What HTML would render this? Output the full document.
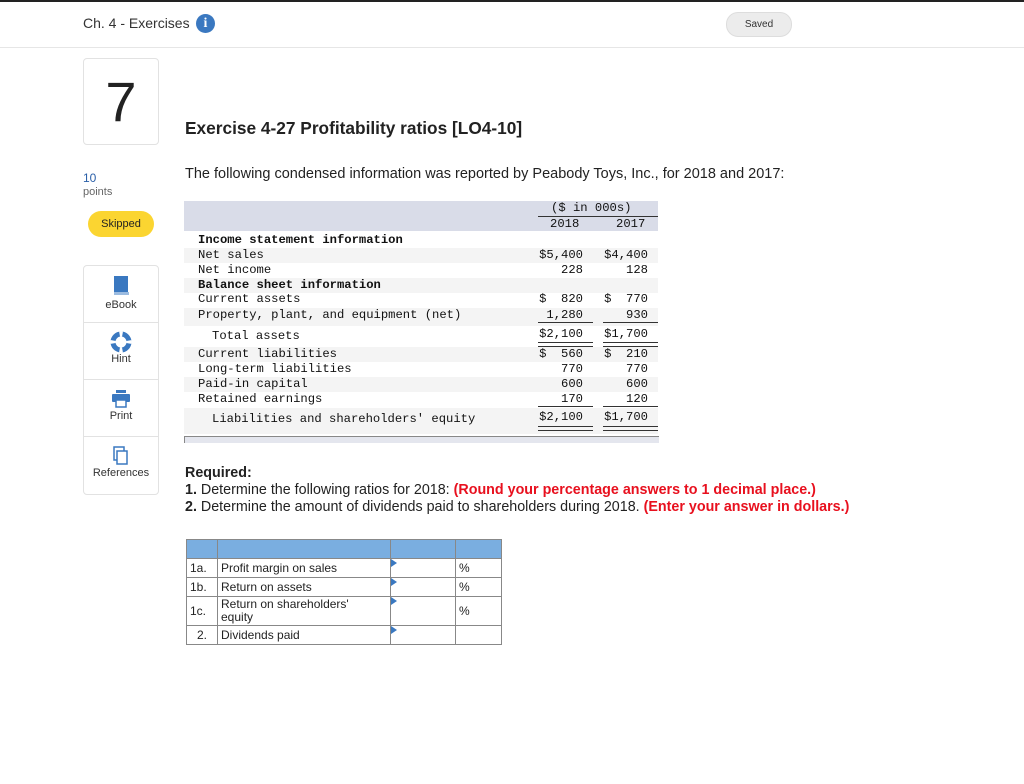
<!DOCTYPE html>
<html><head><style>
body{margin:0;width:1024px;height:784px;background:#fff;font-family:"Liberation Sans",sans-serif;position:relative;overflow:hidden;color:#222}
.a{position:absolute}
.m{font-family:"Liberation Mono",monospace;font-size:12.2px;color:#111}
.row{position:absolute;left:184px;width:474px;height:15px}
.row span{position:absolute;top:0px;white-space:pre}
.c1{right:75px}.c2{right:10px}
.side{position:absolute;left:83px;width:74px;height:57px;border:1px solid #e2e2e2;background:#fff;text-align:center;font-size:11px;color:#333}
td{border:1px solid #888;font-size:12px;padding:0 3px;height:18px}
</style></head><body>
<div class="a" style="left:0;top:0;width:1024px;height:2px;background:#222"></div>
<div class="a" style="left:0;top:47px;width:1024px;height:1px;background:#e6e6e6"></div>
<div class="a" style="left:83px;top:15px;font-size:14px;color:#333">Ch. 4 - Exercises</div>
<div class="a" style="left:196px;top:14px;width:19px;height:19px;border-radius:50%;background:#3a78c0;color:#fff;font-weight:bold;font-size:14px;text-align:center;line-height:19px;font-family:'Liberation Serif',serif">i</div>
<div class="a" style="left:726px;top:12px;width:64px;height:23px;border-radius:12px;background:#ececec;border:1px solid #ddd;font-size:10px;text-align:center;line-height:23px;color:#333">Saved</div>
<div class="a" style="left:83px;top:58px;width:74px;height:85px;border:1px solid #e2e2e2;border-radius:4px;font-size:56px;text-align:center;line-height:85px;color:#222">7</div>
<div class="a" style="left:185px;top:118px;font-size:17.3px;font-weight:bold;color:#222">Exercise 4-27 Profitability ratios [LO4-10]</div>
<div class="a" style="left:83px;top:171px;font-size:12px;color:#2a5fa8">10</div>
<div class="a" style="left:83px;top:186px;font-size:11px;color:#666">points</div>
<div class="a" style="left:88px;top:211px;width:66px;height:26px;border-radius:13px;background:#fbd531;font-size:11px;text-align:center;line-height:26px">Skipped</div>
<div class="side" style="top:265px;border-radius:4px 4px 0 0"><svg width="20" height="24" style="margin-top:8px" viewBox="0 0 20 24"><rect x="3" y="2" width="14" height="18" fill="#3a78c0"/><rect x="3" y="18" width="15" height="3" fill="#9bbbe0"/></svg><div style="margin-top:-2px">eBook</div></div>
<div class="side" style="top:322px"><svg width="22" height="22" style="margin-top:8px" viewBox="0 0 22 22"><circle cx="11" cy="11" r="8" fill="none" stroke="#3a78c0" stroke-width="5"/><circle cx="11" cy="11" r="8" fill="none" stroke="#fff" stroke-width="5" stroke-dasharray="3 9.5" stroke-dashoffset="1.5"/></svg><div style="margin-top:-3px">Hint</div></div>
<div class="side" style="top:379px"><svg width="22" height="22" style="margin-top:8px" viewBox="0 0 22 22"><rect x="6" y="2" width="10" height="3" fill="#3a78c0"/><rect x="2" y="6" width="18" height="8" rx="1" fill="#3a78c0"/><rect x="6" y="12" width="10" height="7" fill="#fff" stroke="#3a78c0" stroke-width="1.5"/></svg><div style="margin-top:-3px">Print</div></div>
<div class="side" style="top:436px;border-radius:0 0 4px 4px"><svg width="22" height="22" style="margin-top:8px" viewBox="0 0 22 22"><rect x="4" y="2" width="10" height="13" fill="#fff" stroke="#3a78c0" stroke-width="1.5"/><rect x="7" y="6" width="10" height="13" fill="#fff" stroke="#3a78c0" stroke-width="1.5"/></svg><div style="margin-top:-3px">References</div></div>
<div class="a" style="left:185px;top:166px;font-size:14.5px;color:#222">The following condensed information was reported by Peabody Toys, Inc., for 2018 and 2017:</div>
<div class="a" style="left:184px;top:201px;width:474px;height:30px;background:#d9dce8"></div>
<div class="a m" style="left:551px;top:201px">($ in 000s)</div>
<div class="a" style="left:538px;top:216px;width:120px;height:1px;background:#333"></div>
<div class="a m" style="left:550px;top:217px">2018</div><div class="a m" style="left:616px;top:217px">2017</div>
<div class="row m" style="top:233px"><span style="left:14px;font-weight:bold">Income statement information</span></div>
<div class="row m" style="top:248px;background:#f4f4f4"><span style="left:14px">Net sales</span><span class="c1">$5,400</span><span class="c2">$4,400</span></div>
<div class="row m" style="top:263px"><span style="left:14px">Net income</span><span class="c1">228</span><span class="c2">128</span></div>
<div class="row m" style="top:278px;background:#f4f4f4"><span style="left:14px;font-weight:bold">Balance sheet information</span></div>
<div class="row m" style="top:292px"><span style="left:14px">Current assets</span><span class="c1">$  820</span><span class="c2">$  770</span></div>
<div class="row m" style="top:308px;height:18px;background:#f4f4f4"><span style="left:14px">Property, plant, and equipment (net)</span><span class="c1">1,280</span><span class="c2">930</span></div>
<div class="a" style="left:538px;top:322px;width:55px;height:1px;background:#333"></div><div class="a" style="left:603px;top:322px;width:55px;height:1px;background:#333"></div>
<div class="row m" style="top:327px;height:18px"><span style="left:28px;top:2px">Total assets</span><span class="c1">$2,100</span><span class="c2">$1,700</span></div>
<div class="a" style="left:538px;top:342px;width:55px;height:3px;border-top:1px solid #333;border-bottom:1px solid #333"></div><div class="a" style="left:603px;top:342px;width:55px;height:3px;border-top:1px solid #333;border-bottom:1px solid #333"></div>
<div class="row m" style="top:347px;background:#f4f4f4"><span style="left:14px">Current liabilities</span><span class="c1">$  560</span><span class="c2">$  210</span></div>
<div class="row m" style="top:362px"><span style="left:14px">Long-term liabilities</span><span class="c1">770</span><span class="c2">770</span></div>
<div class="row m" style="top:377px;background:#f4f4f4"><span style="left:14px">Paid-in capital</span><span class="c1">600</span><span class="c2">600</span></div>
<div class="row m" style="top:392px"><span style="left:14px">Retained earnings</span><span class="c1">170</span><span class="c2">120</span></div>
<div class="a" style="left:538px;top:406px;width:55px;height:1px;background:#333"></div><div class="a" style="left:603px;top:406px;width:55px;height:1px;background:#333"></div>
<div class="row m" style="top:408px;height:26px;background:#f4f4f4"><span style="left:28px;top:4px">Liabilities and shareholders' equity</span><span class="c1" style="top:2px">$2,100</span><span class="c2" style="top:2px">$1,700</span></div>
<div class="a" style="left:538px;top:426px;width:55px;height:3px;border-top:1px solid #333;border-bottom:1px solid #333"></div><div class="a" style="left:603px;top:426px;width:55px;height:3px;border-top:1px solid #333;border-bottom:1px solid #333"></div>
<div class="a" style="left:184px;top:436px;width:474px;height:6px;background:#e4e6ee;border-top:1px solid #888;border-left:1px solid #888"></div>
<div class="a" style="left:185px;top:465px;font-size:14.3px;font-weight:bold">Required:</div>
<div class="a" style="left:185px;top:482px;font-size:14.3px;white-space:nowrap"><b>1.</b> Determine the following ratios for 2018: <b style="color:#e8101e">(Round your percentage answers to 1 decimal place.)</b></div>
<div class="a" style="left:185px;top:499px;font-size:14.3px;white-space:nowrap"><b>2.</b> Determine the amount of dividends paid to shareholders during 2018. <b style="color:#e8101e">(Enter your answer in dollars.)</b></div>
<table class="a" style="left:186px;top:539px;border-collapse:collapse;border:1px solid #888">
<tr style="background:#7aaee0"><td style="width:24px"></td><td style="width:166px"></td><td style="width:58px"></td><td style="width:39px"></td></tr>
<tr><td>1a.</td><td>Profit margin on sales</td><td style="position:relative"><span style="position:absolute;left:0;top:0;border-left:6px solid #3a78c0;border-top:4px solid transparent;border-bottom:4px solid transparent"></span></td><td>%</td></tr>
<tr><td>1b.</td><td>Return on assets</td><td style="position:relative"><span style="position:absolute;left:0;top:0;border-left:6px solid #3a78c0;border-top:4px solid transparent;border-bottom:4px solid transparent"></span></td><td>%</td></tr>
<tr><td>1c.</td><td style="line-height:13px;height:28px">Return on shareholders'<br>equity</td><td style="position:relative"><span style="position:absolute;left:0;top:0;border-left:6px solid #3a78c0;border-top:4px solid transparent;border-bottom:4px solid transparent"></span></td><td>%</td></tr>
<tr><td style="text-align:center">2.</td><td>Dividends paid</td><td style="position:relative"><span style="position:absolute;left:0;top:0;border-left:6px solid #3a78c0;border-top:4px solid transparent;border-bottom:4px solid transparent"></span></td><td></td></tr>
</table>
</body></html>
